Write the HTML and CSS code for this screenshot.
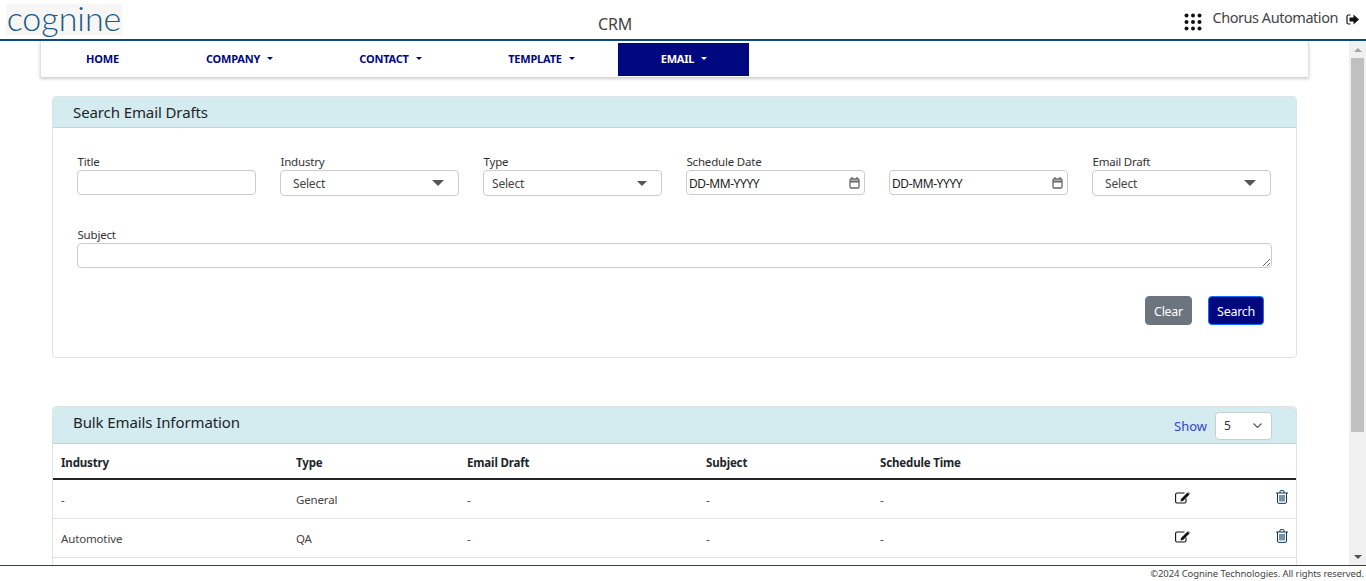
FILE: index.html
```html
<!DOCTYPE html>
<html lang="en">
<head>
  <meta charset="UTF-8">
  <meta name="viewport" content="width=device-width, initial-scale=1.0">
  <title>CRM</title>
  <link rel="stylesheet" href="styles.css">
</head>
<body>

  <header class="topbar">
    <div class="logo">cognine</div>
    <div class="app-name">CRM</div>
    <div class="user-box">
      <svg class="apps-icon" width="18" height="18" viewBox="0 0 18 18" fill="#111">
        <circle cx="2.5" cy="2.5" r="2"/><circle cx="9" cy="2.5" r="2"/><circle cx="15.5" cy="2.500" r="2"/>
        <circle cx="2.5" cy="9" r="2"/><circle cx="9" cy="9" r="2"/><circle cx="15.5" cy="9" r="2"/>
        <circle cx="2.5" cy="15.5" r="2"/><circle cx="9" cy="15.5" r="2"/><circle cx="15.5" cy="15.5" r="2"/>
      </svg>
      <span class="user-name">Chorus Automation</span>
      <svg class="logout-icon" width="13" height="11" viewBox="0 0 13 11">
        <path d="M4.5 1H2.5A1.5 1.5 0 0 0 1 2.5v6A1.5 1.5 0 0 0 2.5 10h2" fill="none" stroke="#111" stroke-width="1.2"/>
        <path d="M7.5 0.5L13 5.5L7.5 10.5V7.5H3.500V3.500H7.5Z" fill="#111"/>
      </svg>
    </div>
  </header>

  <div class="page-body">
    <main class="content">
      <nav class="navbar">
        <a class="nav-item">HOME</a>
        <a class="nav-item caret">COMPANY</a>
        <a class="nav-item caret">CONTACT</a>
        <a class="nav-item caret">TEMPLATE</a>
        <a class="nav-item caret active">EMAIL</a>
      </nav>

      <section class="card search-card">
        <div class="card-head">
          <h2>Search Email Drafts</h2>
        </div>
        <div class="card-body">
          <form class="filters">
            <div class="field">
              <label for="title">Title</label>
              <input type="text" id="title" class="control">
            </div>
            <div class="field">
              <label>Industry</label>
              <div class="control select"><span>Select</span><i class="arrow"></i></div>
            </div>
            <div class="field">
              <label>Type</label>
              <div class="control select type-select"><span>Select</span><i class="arrow"></i></div>
            </div>
            <div class="field">
              <label>Schedule Date</label>
              <div class="control date">
                <span>DD-MM-YYYY</span>
                <svg width="11" height="12" viewBox="0 0 11 12" fill="none" stroke="#666" stroke-width="1.3"><rect x="1" y="2" width="9" height="9" rx="1"/><path d="M1 4.4H10" stroke-width="2"/><path d="M3 0V2M8 0V2"/></svg>
              </div>
            </div>
            <div class="field">
              <label>&nbsp;</label>
              <div class="control date">
                <span>DD-MM-YYYY</span>
                <svg width="11" height="12" viewBox="0 0 11 12" fill="none" stroke="#666" stroke-width="1.3"><rect x="1" y="2" width="9" height="9" rx="1"/><path d="M1 4.4H10" stroke-width="2"/><path d="M3 0V2M8 0V2"/></svg>
              </div>
            </div>
            <div class="field">
              <label>Email Draft</label>
              <div class="control select"><span>Select</span><i class="arrow"></i></div>
            </div>
            <div class="field subject">
              <label for="subject">Subject</label>
              <textarea id="subject" class="control"></textarea>
            </div>
          </form>
          <div class="actions">
            <button type="button" class="btn btn-clear">Clear</button>
            <button type="button" class="btn btn-search">Search</button>
          </div>
        </div>
      </section>

      <section class="card bulk-card">
        <div class="card-head">
          <h2>Bulk Emails Information</h2>
          <div class="show-box">
            <span>Show</span>
            <div class="page-size">5
              <svg width="9" height="5" viewBox="0 0 9 5" fill="none" stroke="#555" stroke-width="1.1"><path d="M0.500 0.500L4.500 4.500L8.500 0.500"/></svg>
            </div>
          </div>
        </div>
        <table class="mails">
          <thead>
            <tr>
              <th class="col-industry">Industry</th>
              <th class="col-type">Type</th>
              <th class="col-draft">Email Draft</th>
              <th class="col-subject">Subject</th>
              <th class="col-time">Schedule Time</th>
              <th class="col-edit"></th>
              <th></th>
            </tr>
          </thead>
          <tbody>
            <tr>
              <td>-</td><td>General</td><td>-</td><td>-</td><td>-</td>
              <td><svg class="edit-icon" width="16" height="13" viewBox="0 0 16 13"><path d="M11 7.500V10.500A1.500 1.500 0 0 1 9.500 12H2A1.500 1.500 0 0 1 0.600 10.500V3.500A1.500 1.500 0 0 1 2 2H9.500" fill="none" stroke="#111" stroke-width="1.100"/><path d="M5.500 10.500L6 8L12.500 1.500L14.500 3.500L8 10Z" fill="#111"/><path d="M13.300 0.700L15.300 2.700L15 3L13 1Z" fill="#111"/></svg></td>
              <td><svg class="trash-icon" width="12" height="14" viewBox="0 0 12 14" fill="none" stroke="#0b3a5c" stroke-width="1"><path d="M0 3H12M4 3V1.200A0.700 0.700 0 0 1 4.700 0.600H7.300A0.700 0.700 0 0 1 8 1.200V3"/><path d="M1.500 3V12A1.400 1.400 0 0 0 2.900 13.400H9.100A1.400 1.400 0 0 0 10.500 12V3"/><path d="M4 5V11.500M6 5V11.500M8 5V11.500" stroke-width="1.100"/></svg></td>
            </tr>
            <tr>
              <td>Automotive</td><td>QA</td><td>-</td><td>-</td><td>-</td>
              <td><svg class="edit-icon" width="16" height="13" viewBox="0 0 16 13"><path d="M11 7.500V10.500A1.500 1.500 0 0 1 9.500 12H2A1.500 1.500 0 0 1 0.600 10.500V3.500A1.500 1.500 0 0 1 2 2H9.500" fill="none" stroke="#111" stroke-width="1.100"/><path d="M5.500 10.500L6 8L12.500 1.500L14.500 3.500L8 10Z" fill="#111"/><path d="M13.300 0.700L15.300 2.700L15 3L13 1Z" fill="#111"/></svg></td>
              <td><svg class="trash-icon" width="12" height="14" viewBox="0 0 12 14" fill="none" stroke="#0b3a5c" stroke-width="1"><path d="M0 3H12M4 3V1.200A0.700 0.700 0 0 1 4.700 0.600H7.300A0.700 0.700 0 0 1 8 1.200V3"/><path d="M1.500 3V12A1.400 1.400 0 0 0 2.900 13.400H9.100A1.400 1.400 0 0 0 10.500 12V3"/><path d="M4 5V11.500M6 5V11.500M8 5V11.500" stroke-width="1.100"/></svg></td>
            </tr>
          </tbody>
        </table>
      </section>
    </main>

    <div class="scrollbar">
      <div class="scroll-btn"><i class="scroll-up"></i></div>
      <div class="scroll-track"><div class="scroll-thumb"></div></div>
      <div class="scroll-btn"><i class="scroll-down"></i></div>
    </div>
  </div>

  <footer class="page-foot">©2024 Cognine Technologies. All rights reserved.</footer>

</body>
</html>
```

FILE: styles.css
```css
* {
  box-sizing: border-box;
}

html, body {
  height: 100%;
}

body {
  margin: 0;
  display: flex;
  flex-direction: column;
  overflow: hidden;
  font-family: "Noto Sans", "Open Sans", sans-serif;
  color: #212529;
  background-color: #fff;
}

/* top bar */
.topbar {
  flex: none;
  height: 41px;
  display: flex;
  align-items: flex-start;
  border-bottom: 2px solid #0d4a7d;
  padding: 4px 7px 0 6px;
}

.logo {
  width: 116px;
  height: 31px;
  background-color: #f6f6f6;
  color: #1c5986;
  font-family: "Lato", sans-serif;
  font-weight: 300;
  font-size: 34px;
  line-height: 18px;
  padding-top: 5px;
  text-align: center;
  white-space: nowrap;
}

.app-name {
  font-size: 16px;
  line-height: 20px;
  margin: 10px 0 0 476px;
  letter-spacing: -0.1px;
  color: #444;
}

.user-box {
  display: flex;
  align-items: flex-start;
  margin-left: auto;
  color: #444;
  font-size: 14.5px;
}

.apps-icon {
  margin: 9px 10px 0 0;
}

.user-name {
  line-height: 20px;
  margin-top: 3px;
  letter-spacing: -0.45px;
}

.logout-icon {
  margin: 10px 0 0 8px;
}

/* scrolling area */
.page-body {
  flex: 1;
  min-height: 0;
  display: flex;
}

.content {
  flex: 1;
  min-width: 0;
  overflow: hidden;
  padding: 0 40px;
}

.scrollbar {
  flex: none;
  width: 17px;
  display: flex;
  flex-direction: column;
  background-color: #f0f0f0;
}

.scroll-btn {
  flex: none;
  height: 17px;
  display: flex;
  align-items: center;
  justify-content: center;
}

.scroll-up {
  border-bottom: 4px solid #a3a3a3;
  border-left: 4px solid transparent;
  border-right: 4px solid transparent;
}

.scroll-down {
  border-top: 4px solid #505050;
  border-left: 4px solid transparent;
  border-right: 4px solid transparent;
}

.scroll-track {
  flex: 1;
  padding: 0 2px;
}

.scroll-thumb {
  height: 374px;
  background-color: #c0c0c0;
}

/* nav */
.navbar {
  display: grid;
  grid-template-columns: 121px 153px 149px 153px 131px;
  width: 1269px;
  height: 36px;
  padding: 2px 0 1px 1px;
  background-color: #fff;
  border-left: 1px solid #dee2e6;
  border-right: 1px solid #dee2e6;
  box-shadow: 0 2px 3px rgba(0, 0, 0, 0.2);
}

.nav-item {
  display: flex;
  align-items: center;
  justify-content: center;
  padding-bottom: 3px;
  font-size: 11px;
  font-weight: 700;
  color: #00087f;
  letter-spacing: -0.2px;
}

.nav-item.caret::after {
  content: "";
  margin-left: 7px;
  border-top: 3px solid currentColor;
  border-left: 3px solid transparent;
  border-right: 3px solid transparent;
}

.nav-item.active {
  padding-left: 1px;
  background-color: #00087f;
  color: #fff;
}

/* cards */
.card {
  width: 1245px;
  margin-left: 12px;
  border: 1px solid #dfe3e6;
  border-radius: 4px;
  overflow: hidden;
}

.search-card {
  margin-top: 19px;
  height: 262px;
}

.bulk-card {
  margin-top: 48px;
  min-height: 240px;
}

.card-head {
  display: flex;
  align-items: center;
  justify-content: space-between;
  background-color: #d4ebf0;
  border-bottom: 1px solid #c3d5da;
  padding: 0 24px 0 20px;
}

.search-card .card-head {
  height: 31px;
}

.bulk-card .card-head {
  height: 37px;
}

.card-head h2 {
  margin: 0;
  font-size: 15px;
  font-weight: 400;
  letter-spacing: -0.1px;
}

.bulk-card .card-head h2 {
  margin-top: -7px;
}

.card-body {
  padding: 26px 24px 0;
}

.filters {
  display: grid;
  grid-template-columns: repeat(6, 179px);
  column-gap: 24px;
  row-gap: 31px;
}

.field {
  display: flex;
  flex-direction: column;
}

.subject {
  grid-column: span 6;
}

label {
  font-size: 11.5px;
  line-height: 15px;
  margin: 0 0 1px 0.5px;
  letter-spacing: -0.2px;
  color: #333;
}

.control {
  width: 100%;
  height: 25px;
  border: 1px solid #ccc;
  border-radius: 4px;
  background-color: #fff;
  font-family: inherit;
  font-size: 12px;
  color: #444;
}

.select {
  height: 26px;
  display: flex;
  align-items: center;
  justify-content: space-between;
  padding: 0 14px 0 12px;
  letter-spacing: -0.2px;
}

.type-select {
  padding: 0 14px 0 8px;
}

.arrow {
  border-top: 6px solid #555;
  border-left: 6px solid transparent;
  border-right: 6px solid transparent;
}

.type-select .arrow {
  border-top-width: 5px;
  border-left-width: 5px;
  border-right-width: 5px;
}

.date {
  display: flex;
  align-items: center;
  justify-content: space-between;
  padding: 1px 4px 0 2px;
  color: #222;
  letter-spacing: -0.4px;
}

.date svg {
  margin-top: -1px;
}

textarea.control {
  display: block;
  width: 1195px;
  margin: 0;
}

.actions {
  display: flex;
  justify-content: flex-end;
  gap: 16px;
  margin-top: 28px;
  padding-right: 8px;
}

.btn {
  height: 29px;
  font-family: inherit;
  font-size: 12.5px;
  letter-spacing: -0.3px;
  color: #fff;
  border-radius: 4px;
  padding: 2px 0 0;
}

.btn-clear {
  width: 47px;
  background-color: #6c757d;
  border: 1px solid #6c757d;
}

.btn-search {
  width: 56px;
  background-color: #00087f;
  border: 1px solid #0d6efd;
}

/* show dropdown */
.show-box {
  display: flex;
  align-items: center;
  gap: 8px;
  margin-top: 2px;
  font-size: 13px;
  color: #3344cc;
}

.page-size {
  width: 57px;
  height: 28px;
  margin-top: -1px;
  display: flex;
  align-items: center;
  justify-content: space-between;
  padding: 0 9px 0 8px;
  background-color: #fff;
  border: 1px solid #ccc;
  border-radius: 4px;
  font-size: 12px;
  color: #333;
}

/* table */
.mails {
  width: 100%;
  table-layout: fixed;
  border-collapse: collapse;
  font-size: 11.5px;
  letter-spacing: -0.15px;
}

.mails th {
  height: 35px;
  padding: 2px 8px 0;
  text-align: left;
  font-weight: 700;
  border-bottom: 2px solid #212529;
}

.mails td {
  height: 39px;
  padding: 2px 8px 0;
  border-bottom: 1px solid #dee2e6;
  color: #444;
}

.mails td svg {
  display: block;
  margin-top: -5px;
}

.col-industry { width: 235px; }
.col-type { width: 171px; }
.col-draft { width: 239px; }
.col-subject { width: 174px; }
.col-time { width: 295px; }
.col-edit { width: 101px; }

/* footer */
.page-foot {
  flex: none;
  height: 16px;
  border-top: 1px solid #0d4a7d;
  padding-right: 2px;
  text-align: right;
  font-size: 9.5px;
  line-height: 15px;
  letter-spacing: -0.1px;
  color: #444;
}
```
